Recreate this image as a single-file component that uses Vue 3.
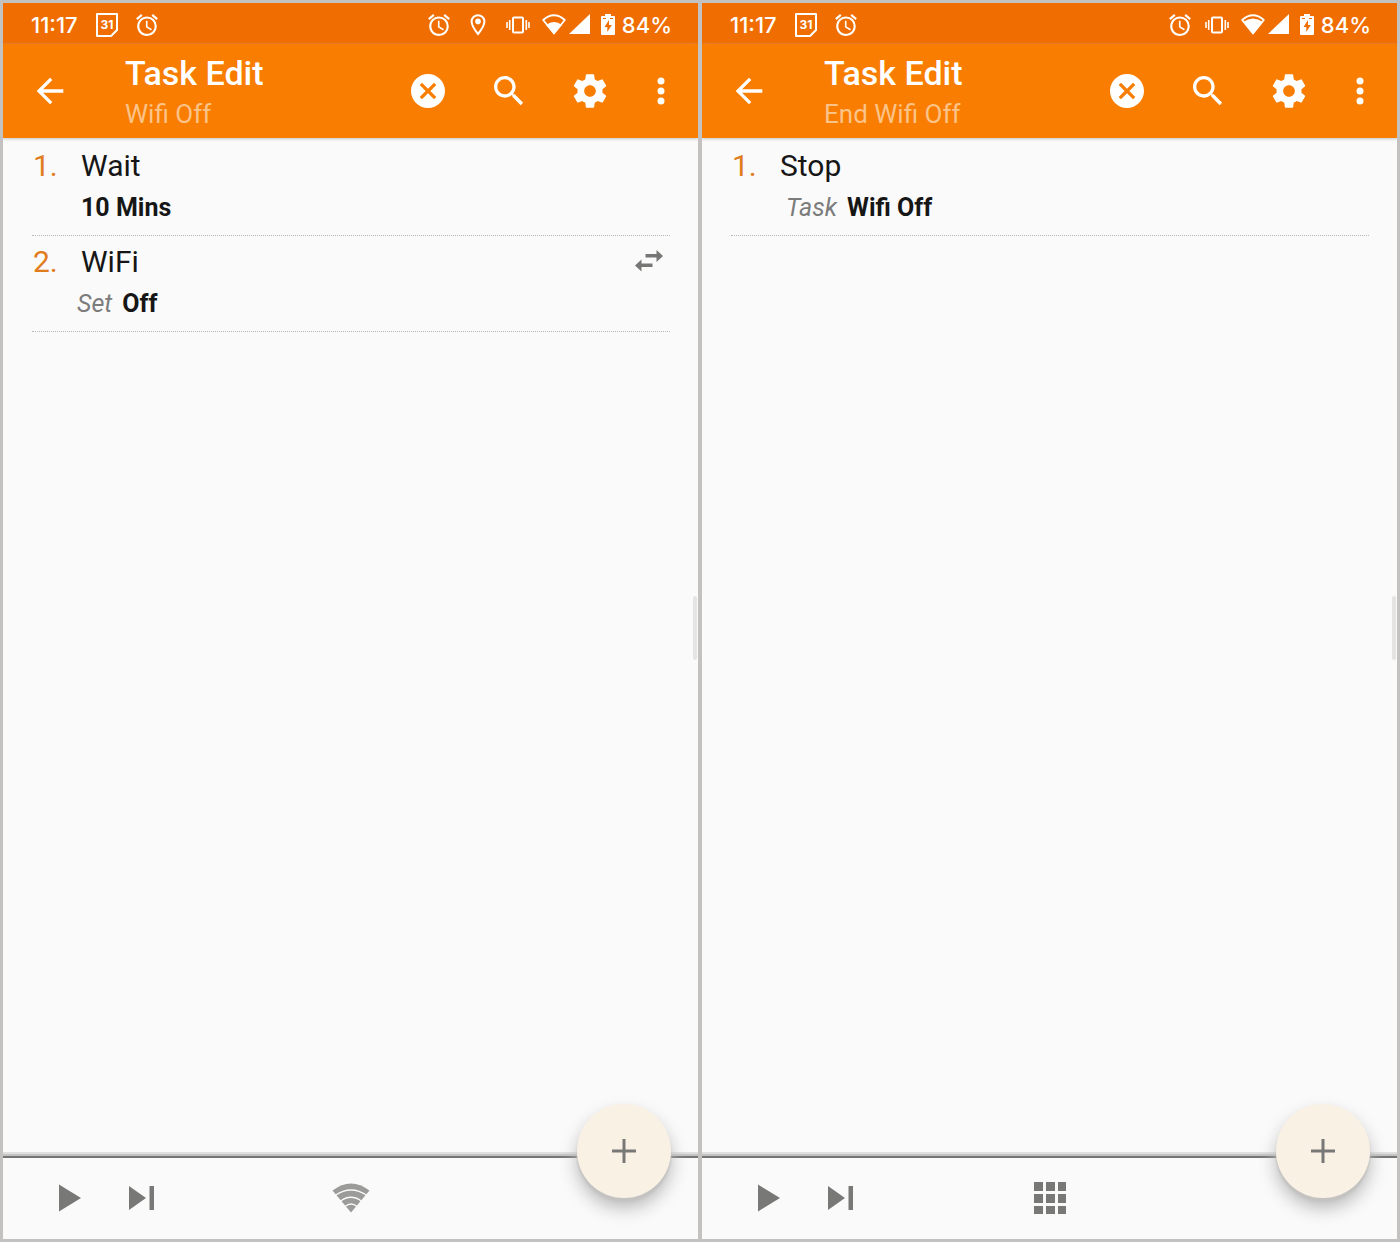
<script setup>
const phones = [
  {
    id: 'start',
    subtitle: 'Wifi Off',
    location: true,
    taskIcon: 'wifi',
    signalFill: 'M12 20 4 11Q12 5 20 11Z',
    actions: [
      { name: 'Wait', value: '10 Mins' },
      { name: 'WiFi', label: 'Set', value: 'Off', swap: true },
    ],
  },
  {
    id: 'end',
    subtitle: 'End Wifi Off',
    location: false,
    taskIcon: 'grid',
    signalFill: 'M12 20 2 8Q12 1 22 8Z',
    actions: [{ name: 'Stop', label: 'Task', value: 'Wifi Off', inset: true }],
  },
]

const alarmPath =
  'M22 5.72l-4.6-3.86-1.29 1.53 4.6 3.86L22 5.72zM7.88 3.39L6.6 1.86 2 5.71l1.29 1.53 4.59-3.85zM12.5 8H11v6l4.75 2.85.75-1.23-4-2.37V8zM12 4c-4.97 0-9 4.03-9 9s4.02 9 9 9a9 9 0 0 0 0-18zm0 16c-3.87 0-7-3.13-7-7s3.13-7 7-7 7 3.13 7 7-3.13 7-7 7z'
</script>

<template>
  <main class="board">
    <section v-for="phone in phones" :key="phone.id" class="phone">
      <div class="status">
        <div class="status-left">
          <span class="status-text">11:17</span>
          <svg class="calendar" width="24" height="24" viewBox="0 0 24 24" aria-hidden="true">
            <path d="M2 1h20v16l-6 6H2z" fill="none" stroke="#fff" stroke-width="2" stroke-linejoin="round" />
            <path d="M23 16v1l-6 6h-1z" fill="#fff" />
            <text x="12" y="16" text-anchor="middle" class="calendar-day">31</text>
          </svg>
          <svg width="22" height="22" viewBox="2 1.8 20 20.2" fill="#fff" aria-hidden="true"><path :d="alarmPath" /></svg>
        </div>
        <div class="status-right">
          <svg width="22" height="22" viewBox="2 1.8 20 20.2" fill="#fff" aria-hidden="true"><path :d="alarmPath" /></svg>
          <svg v-if="phone.location" width="28" height="22" viewBox="0 0 28 22" aria-hidden="true">
            <path d="M14 1.2a6.4 6.4 0 0 0-6.4 6.4c0 4.6 6.4 12.4 6.4 12.4s6.400-7.800 6.400-12.400A6.4 6.4 0 0 0 14 1.2z" fill="none" stroke="#fff" stroke-width="2" />
            <circle cx="14" cy="7.400" r="2.800" fill="#fff" />
          </svg>
          <svg width="24" height="18" viewBox="0 0 24 18" fill="none" stroke="#fff" aria-hidden="true">
            <rect x="7" y="1.500" width="10" height="15" rx="1" stroke-width="2" />
            <path d="M1 6v6M3.700 4v10M20.300 4v10M23 6v6" stroke-width="1.600" />
          </svg>
          <div class="radio">
            <svg width="24" height="21" viewBox="0 0 24 21" aria-hidden="true">
              <path d="M1.200 6Q12-3.500 22.800 6L12 19.500z" fill="none" stroke="#fff" stroke-width="1.800" stroke-linejoin="round" />
              <path :d="phone.signalFill" fill="#fff" />
            </svg>
            <svg width="22" height="21" viewBox="0 0 22 21" aria-hidden="true"><path d="M21 0v20H0z" fill="#fff" /></svg>
          </div>
          <div class="battery">
            <svg width="14" height="22" viewBox="0 0 14 22" aria-hidden="true">
              <path d="M4 0h6v2h3q1 0 1 1v17q0 1-1 1H1q-1 0-1-1V3q0-1 1-1h3z" fill="#fff" />
              <path d="M8 6 3.500 13H6.300v5L10.800 11H8zM2 4h3v1H2zM9 4h3v1H9z" fill="#f06d02" />
            </svg>
            <span class="status-text">84%</span>
          </div>
        </div>
      </div>

      <header class="appbar">
        <button class="icon" aria-label="Back">
          <svg width="40" height="40" viewBox="0 0 24 24"><path d="M20 11H7.830l5.590-5.590L12 4l-8 8 8 8 1.410-1.410L7.830 13H20v-2z" /></svg>
        </button>
        <div class="titles">
          <h1>Task Edit</h1>
          <p>{{ phone.subtitle }}</p>
        </div>
        <div class="tools">
          <button class="icon" aria-label="Discard">
            <svg width="40" height="40" viewBox="0 0 24 24"><path d="M12 1.800C6.370 1.800 1.800 6.370 1.800 12S6.370 22.200 12 22.200 22.200 17.630 22.200 12 17.630 1.800 12 1.800zm5 13.790L15.590 17 12 13.410 8.410 17 7 15.590 10.590 12 7 8.410 8.410 7 12 10.590 15.590 7 17 8.410 13.410 12 17 15.590z" /></svg>
          </button>
          <button class="icon" aria-label="Search">
            <svg width="40" height="40" viewBox="0 0 24 24"><path d="M15.500 14h-.79l-.28-.27C15.410 12.590 16 11.110 16 9.500 16 5.910 13.090 3 9.500 3S3 5.910 3 9.500 5.910 16 9.500 16c1.610 0 3.090-.59 4.230-1.570l.27.28v.79l5 4.990L20.490 19l-4.990-5zm-6 0C7.010 14 5 11.990 5 9.500S7.010 5 9.500 5 14 7.010 14 9.500 11.990 14 9.500 14z" /></svg>
          </button>
          <button class="icon" aria-label="Settings">
            <svg width="40" height="40" viewBox="0 0 24 24"><path d="M19.430 12.980c.04-.32.07-.64.07-.98s-.03-.66-.07-.98l2.110-1.650c.19-.15.24-.42.12-.64l-2-3.460c-.12-.22-.39-.3-.61-.22l-2.490 1c-.52-.4-1.080-.73-1.690-.98l-.38-2.650C14.460 2.180 14.250 2 14 2h-4c-.25 0-.46.18-.49.42l-.38 2.650c-.61.25-1.170.59-1.690.98l-2.490-1c-.23-.09-.49 0-.61.22l-2 3.460c-.13.22-.07.49.12.64l2.110 1.650c-.04.32-.07.65-.07.98s.03.66.07.98l-2.110 1.650c-.19.15-.24.42-.12.64l2 3.460c.12.22.39.3.61.22l2.490-1c.52.4 1.080.73 1.690.98l.38 2.650c.03.24.24.42.49.42h4c.25 0 .46-.18.49-.42l.38-2.650c.61-.25 1.170-.59 1.690-.98l2.490 1c.23.09.49 0 .61-.22l2-3.460c.12-.22.07-.49-.12-.64l-2.110-1.650zM12 15.500c-1.930 0-3.500-1.570-3.500-3.500s1.570-3.500 3.500-3.500 3.500 1.570 3.500 3.500-1.570 3.500-3.500 3.500z" /></svg>
          </button>
          <button class="icon" aria-label="More options">
            <svg width="20" height="40" viewBox="6 0 12 24"><circle cx="12" cy="6" r="2.100" /><circle cx="12" cy="12" r="2.100" /><circle cx="12" cy="18" r="2.100" /></svg>
          </button>
        </div>
      </header>

      <ol class="actions">
        <li v-for="(action, i) in phone.actions" :key="action.name" class="action">
          <span class="number">{{ i + 1 }}.</span>
          <div class="body">
            <h2>{{ action.name }}</h2>
            <p class="detail" :class="{ labelled: action.label, inset: action.inset }">
              <em v-if="action.label">{{ action.label }}</em>
              <strong>{{ action.value }}</strong>
            </p>
          </div>
          <svg v-if="action.swap" class="swap" width="28" height="22" viewBox="0 0 28 22" aria-hidden="true">
            <path d="M10.500 4H21.500V0L28 6 21.500 12V7.500H10.500zM17.500 13.500H6.500V9.500L0 15.500 6.500 21.500V17H17.500z" />
          </svg>
        </li>
      </ol>

      <span class="edge-handle"></span>

      <footer class="bottombar">
        <div class="playback">
          <button class="icon" aria-label="Run">
            <svg width="22" height="28" viewBox="0 0 22 28"><path d="M0 0.500V27.500L22 14z" /></svg>
          </button>
          <button class="icon" aria-label="Step">
            <svg width="26" height="26" viewBox="0 0 26 26"><path d="M0 1V25L17 13zM20.500 1h4.500v24h-4.500z" /></svg>
          </button>
        </div>
        <button class="icon" aria-label="Task icon">
          <svg v-if="phone.taskIcon === 'wifi'" width="38" height="34" viewBox="0 0 38 34">
            <path d="M0.500 9.500Q19-4.500 37.500 9.500L19 31.500z" fill="#9b9b9a" />
            <path d="M3 14.500Q19 3.500 35 14.500M8 20.500Q19 12 30 20.500M13 25.500Q19 20.500 25 25.500" fill="none" stroke="#fafafa" stroke-width="1.400" />
          </svg>
          <svg v-else width="34" height="34" viewBox="0 0 34 34">
            <path d="M1 1h9v9H1zM13 1h9v9h-9zM25 1h8v9h-8zM1 13h9v9H1zM13 13h9v9h-9zM25 13h8v9h-8zM1 25h9v8H1zM13 25h9v8h-9zM25 25h8v8h-8z" />
          </svg>
        </button>
        <button class="fab" aria-label="Add action">
          <svg width="24" height="24" viewBox="0 0 24 24"><path d="M10.500 0h3v10.500H24v3H13.500V24h-3V13.500H0v-3h10.500z" /></svg>
        </button>
      </footer>
    </section>
  </main>
</template>

<style>
body {
  margin: 0;
}
</style>

<style scoped>
* {
  box-sizing: border-box;
}

.board {
  display: grid;
  grid-template-columns: 1fr 1fr;
  gap: 4px;
  min-height: 100vh;
  padding: 3px;
  background: #c3c2c1;
  font-family: Roboto, "Liberation Sans", sans-serif;
  color: #161616;
}

svg {
  display: block;
  flex: none;
}

h1,
h2,
p {
  margin: 0;
}

.phone {
  position: relative;
  display: flex;
  flex-direction: column;
  background: #fafafa;
}

.status {
  display: flex;
  justify-content: space-between;
  align-items: center;
  height: 41px;
  padding: 2px 26px 0 28px;
  background: #f06d02;
}

.status-left,
.status-right,
.radio,
.battery {
  display: flex;
  align-items: center;
}

.status-left {
  gap: 17px;
}

.status-right {
  gap: 14px;
}

.radio {
  gap: 3px;
  margin-left: -2px;
}

.battery {
  gap: 7px;
  margin-left: -4px;
}

.status-text {
  font: 500 22px/28px Inter, sans-serif;
  color: #fff;
}

.calendar-day {
  font: 700 12px Inter, sans-serif;
  fill: #fff;
}

.appbar {
  display: flex;
  align-items: center;
  height: 94px;
  padding: 0 27px;
  background: #f87d01;
  box-shadow: 0 1px 3px #c4c4c4;
}

.icon {
  flex: none;
  padding: 0;
  border: 0;
  background: none;
}

.appbar .icon {
  fill: #fff;
}

.titles {
  flex: 1;
  padding: 4px 0 0 55px;
}

h1 {
  font-size: 34px;
  line-height: 42px;
  font-weight: 500;
  color: #fff;
}

.titles p {
  font-size: 26px;
  line-height: 40px;
  font-weight: 400;
  color: #fcc388;
}

.tools {
  display: flex;
  gap: 41px;
}

.actions {
  flex: 1;
  margin: 0;
  padding: 2px 28px 0 29px;
  list-style: none;
}

.action {
  display: flex;
  height: 96px;
  padding-top: 8px;
  border-bottom: 1px dotted #b8b8b8;
}

.number {
  width: 49px;
  padding-left: 1px;
  font-size: 30px;
  line-height: 36px;
  color: #e07c1c;
}

.body {
  flex: 1;
}

h2 {
  font-size: 30px;
  line-height: 36px;
  font-weight: 400;
}

.detail {
  display: flex;
  gap: 10px;
  padding-top: 4px;
  font-size: 25px;
  line-height: 40px;
}

.detail em {
  font-weight: 400;
  color: #7c7c7c;
}

.labelled {
  margin-left: -4px;
}

.inset {
  margin-left: 6px;
}

.swap {
  margin: 6px 7px 0 0;
  fill: #767675;
}

.edge-handle {
  position: absolute;
  top: 48%;
  right: 1px;
  width: 4px;
  height: 64px;
  border-radius: 2px;
  background: #e4e4e4;
}

.bottombar {
  position: relative;
  display: grid;
  grid-template-columns: 1fr auto 1fr;
  align-items: center;
  height: 83px;
  padding-bottom: 2px;
  border-top: 2px solid #757575;
  box-shadow: 0 -2px 0 #c3c3c2, 0 -4px 0 #dfdfdf;
  fill: #787877;
}

.playback {
  display: flex;
  align-items: center;
  gap: 48px;
  padding-left: 56px;
}

.fab {
  position: absolute;
  right: 27px;
  bottom: 41px;
  display: grid;
  place-items: center;
  width: 94px;
  height: 94px;
  padding: 0;
  border: 0;
  border-radius: 50%;
  background: #faf1e5;
  box-shadow: 0 4px 2px #c4c3c2, 0 10px 18px #b8b8b8;
  fill: #787877;
}
</style>
